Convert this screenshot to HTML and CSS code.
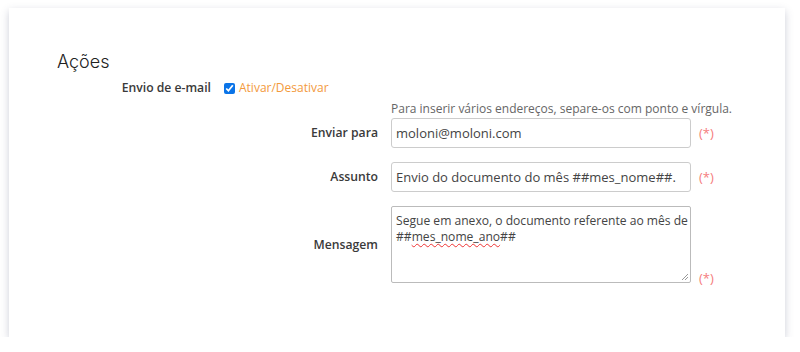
FILE: index.html
```html
<!DOCTYPE html>
<html lang="pt">
<head>
    <meta charset="UTF-8">
    <title>Ações</title>
    <link rel="stylesheet" href="styles.css">
</head>
<body>
    <div class="card">
        <h2>Ações</h2>

        <div class="row">
            <label class="label">Envio de e-mail</label>
            <div class="value">
                <label class="toggle"><input type="checkbox" checked> Ativar/Desativar</label>

                <div class="fields">
                    <span></span>
                    <div class="hint">Para inserir vários endereços, separe-os com ponto e vírgula.</div>
                    <span></span>

                    <label class="label" for="to">Enviar para</label>
                    <input type="text" id="to" value="moloni@moloni.com">
                    <span class="req">(*)</span>

                    <label class="label" for="subject">Assunto</label>
                    <input type="text" id="subject" value="Envio do documento do mês ##mes_nome##.">
                    <span class="req">(*)</span>

                    <label class="label">Mensagem</label>
                    <div class="textarea">Segue em anexo, o documento referente ao mês de<br>##<span class="typo">mes_nome_ano</span>##<svg class="grip" width="8" height="8" viewBox="0 0 8 8"><path d="M7 1L1 7M7 4L4 7" stroke="#999" stroke-width="1"/></svg></div>
                    <span class="req bottom">(*)</span>
                </div>
            </div>
        </div>
    </div>
</body>
</html>
```

FILE: styles.css
```css
body { margin: 0; background: #fff; font-family: "Open Sans", sans-serif; font-size: 13px; color: #333; }
.card { margin: 8px 0 0 9px; width: 776px; height: 329px; box-sizing: border-box; padding: 42px 48px 0; background: #fff; box-shadow: 0 3px 8px rgba(60,70,110,0.26); }
h2 { margin: 0 0 5px; font-family: "Inter", sans-serif; font-weight: 300; font-size: 18px; line-height: 24px; color: #222; }
.row { display: grid; grid-template-columns: 154px auto; column-gap: 13px; }
.label { text-align: right; font-weight: 600; font-size: 12.2px; color: #3a3a3a; line-height: 18px; }
.toggle { display: flex; align-items: center; gap: 4px; color: #f39a3c; font-size: 12px; line-height: 18px; }
.toggle input { margin: 0; width: 11px; height: 11px; accent-color: #0a74e8; }
.fields { display: grid; grid-template-columns: 154px 300px auto; column-gap: 13px; row-gap: 14px; align-items: center; margin-top: 3px; }
.fields .hint { color: #666; font-size: 12px; line-height: 18px; white-space: nowrap; margin-bottom: -14px; }
.fields .label { margin-left: -167px; width: 321px; }
input[type=text] { height: 30px; box-sizing: border-box; border: 1px solid #ccc; border-radius: 3px; padding: 0 4px; font-family: "Open Sans", sans-serif; font-size: 13px; color: #444; margin: 0; }
.textarea { position: relative; height: 77px; box-sizing: border-box; border: 1px solid #bbb; border-radius: 2px; padding: 6px 0 0 4px; font-size: 12.1px; line-height: 16px; color: #444; white-space: nowrap; }
.typo { text-decoration: underline wavy #e33; text-decoration-thickness: 1px; text-underline-offset: 2px; }
.grip { position: absolute; right: 1px; bottom: 1px; }
.req { color: #f57c7c; margin-left: -5px; }
.req.bottom { align-self: end; margin-bottom: -4px; }
```
